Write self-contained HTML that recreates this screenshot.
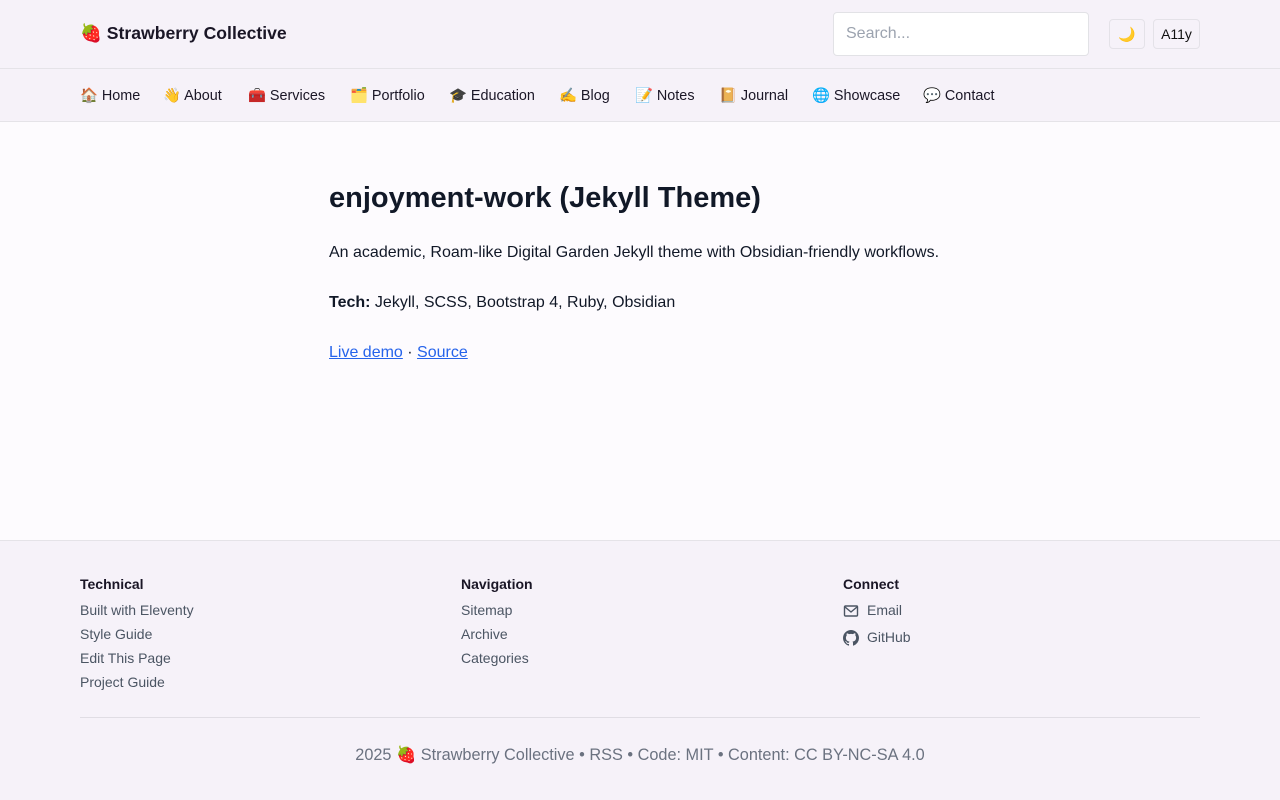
<!DOCTYPE html>
<html><head><meta charset="utf-8">
<style>
*{box-sizing:border-box;margin:0;padding:0}
body{width:1280px;height:800px;background:#fdfbfe;font-family:"Liberation Sans",sans-serif;color:#111827;overflow:hidden}
.top{height:69px;background:#f6f2f9;border-bottom:1px solid #e5e3e8;position:relative}
.logo{position:absolute;left:80px;top:23px;font-size:17.6px;font-weight:bold;color:#1a1626}
.search{position:absolute;left:833px;top:12px;width:256px;height:44px;background:#fff;border:1px solid #e2e2e6;border-radius:4px;padding:0 12px;line-height:42px;font-size:16px;color:#9ca3af}
.btn{position:absolute;top:19px;height:30px;border:1px solid #e4e2e8;border-radius:4px;background:#f6f2f9;font-size:14px;line-height:28px;text-align:center;color:#111}
.nav{height:53px;background:#f6f2f9;border-bottom:1px solid #e5e3e8;position:relative;font-size:14.4px;color:#1a1626}
.nav span{position:absolute;top:18px;white-space:nowrap}
main{height:418px;padding:58px 0 0 329px}
h1{font-size:29px;font-weight:bold;color:#111827;line-height:36px;margin-bottom:25px}
p{font-size:16px;line-height:24px;margin-bottom:26px;color:#111827}
a{color:#2563eb;text-decoration:underline}
footer{background:#f6f2f9;border-top:1px solid #e5e3e8;height:260px;position:relative}
.col{position:absolute;top:35px;font-size:14px;color:#4b5563}
.col h4{font-size:14px;color:#1a1626;font-weight:bold;margin-bottom:10px}
.col div{margin-bottom:7px;line-height:17px}
.line{position:absolute;left:80px;right:80px;top:176px;border-top:1px solid #e0dde4}
.copy{position:absolute;top:204px;width:100%;text-align:center;font-size:16.3px;color:#6b7280}
</style></head><body>
<div class="top">
<div class="logo">🍓 Strawberry Collective</div>
<div class="search">Search...</div>
<div class="btn" style="left:1109px;width:36px">🌙</div>
<div class="btn" style="left:1153px;width:47px">A11y</div>
</div>
<div class="nav"><span style="left:80px">🏠 Home</span><span style="left:163px">👋 About</span><span style="left:248px">🧰 Services</span><span style="left:350px">🗂️ Portfolio</span><span style="left:449px">🎓 Education</span><span style="left:559px">✍️ Blog</span><span style="left:635px">📝 Notes</span><span style="left:719px">📔 Journal</span><span style="left:812px">🌐 Showcase</span><span style="left:923px">💬 Contact</span></div>
<main>
<h1>enjoyment-work (Jekyll Theme)</h1>
<p>An academic, Roam-like Digital Garden Jekyll theme with Obsidian-friendly workflows.</p>
<p><b>Tech:</b> Jekyll, SCSS, Bootstrap 4, Ruby, Obsidian</p>
<p><a>Live demo</a> · <a>Source</a></p>
</main>
<footer>
<div class="col" style="left:80px"><h4>Technical</h4><div>Built with Eleventy</div><div>Style Guide</div><div>Edit This Page</div><div>Project Guide</div></div>
<div class="col" style="left:461px"><h4>Navigation</h4><div>Sitemap</div><div>Archive</div><div>Categories</div></div>
<div class="col" style="left:843px"><h4>Connect</h4>
<div style="display:flex;align-items:center;gap:8px;margin-bottom:10px"><svg width="16" height="16" viewBox="0 0 16 16" fill="none" stroke="#4b5563" stroke-width="1.4"><rect x="1.5" y="3" width="13" height="10" rx="1"/><path d="M2 4l6 5 6-5"/></svg>Email</div>
<div style="display:flex;align-items:center;gap:8px"><svg width="16" height="16" viewBox="0 0 16 16" fill="#4b5563"><path d="M8 0C3.58 0 0 3.58 0 8c0 3.54 2.29 6.53 5.47 7.59.4.07.55-.17.55-.38v-1.33c-2.23.48-2.7-1.07-2.7-1.07-.36-.92-.89-1.17-.89-1.17-.73-.5.06-.49.06-.49.8.06 1.23.83 1.23.83.71 1.22 1.87.87 2.33.66.07-.52.28-.87.51-1.07-1.78-.2-3.64-.89-3.64-3.95 0-.87.31-1.59.82-2.15-.08-.2-.36-1.02.08-2.12 0 0 .67-.21 2.2.82A7.6 7.6 0 0 1 8 3.86c.68 0 1.36.09 2 .27 1.53-1.04 2.2-.82 2.2-.82.44 1.1.16 1.92.08 2.12.51.56.82 1.27.82 2.15 0 3.07-1.87 3.75-3.65 3.95.29.25.54.73.54 1.48v2.2c0 .21.15.46.55.38A8.01 8.01 0 0 0 16 8c0-4.42-3.58-8-8-8z"/></svg>GitHub</div>
</div>
<div class="line"></div>
<div class="copy">2025 🍓 Strawberry Collective • RSS • Code: MIT • Content: CC BY-NC-SA 4.0</div>
</footer>
</body></html>
